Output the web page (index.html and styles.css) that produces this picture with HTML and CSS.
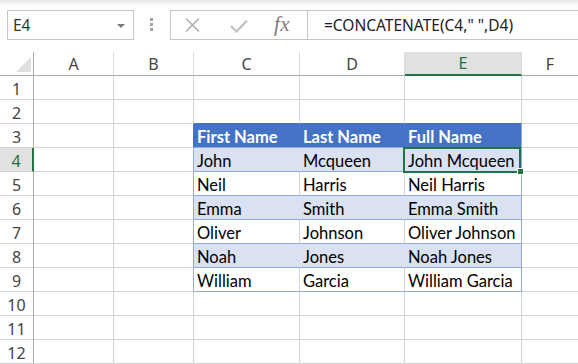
FILE: index.html
```html
<!DOCTYPE html>
<html>
<head>
<meta charset="utf-8">
<link rel="stylesheet" href="styles.css">
</head>
<body>
<div class="fbar">
  <div class="namebox"><span class="ref">E4</span><span class="arrow"></span></div>
  <div class="grip"><i></i><i></i><i></i></div>
  <div class="fbox">
    <div class="btns">
      <svg class="ic-x" width="15" height="14" viewBox="0 0 15 14"><path d="M1 0.5 L14 13.5 M14 0.5 L1 13.5" stroke="#a9a9a9" stroke-width="1.4" fill="none"/></svg>
      <svg class="ic-ok" width="18" height="14" viewBox="0 0 18 14"><path d="M1 7 L6.5 12.5 L17 1.5" stroke="#c3c3c3" stroke-width="2.4" fill="none"/></svg>
      <span class="fx">fx</span>
    </div>
    <div class="formula">=CONCATENATE(C4," ",D4)</div>
  </div>
</div>
<div class="sheet">
  <div class="corner"></div><div class="ch">A</div><div class="ch">B</div><div class="ch">C</div><div class="ch">D</div><div class="ch sel">E</div><div class="ch last">F</div>

  <div class="rh">1</div><div class="c"></div><div class="c"></div><div class="c"></div><div class="c"></div><div class="c"></div><div class="c last"></div>
  <div class="rh">2</div><div class="c"></div><div class="c"></div><div class="c top"></div><div class="c top"></div><div class="c top"></div><div class="c last"></div>
  <div class="rh">3</div><div class="c"></div><div class="c lhd"></div><div class="c hd">First Name</div><div class="c hd">Last Name</div><div class="c hd end">Full Name</div><div class="c last"></div>
  <div class="rh sel">4</div><div class="c"></div><div class="c ledge"></div><div class="c band">John</div><div class="c band">Mcqueen</div><div class="c band end">John Mcqueen</div><div class="c last"></div>
  <div class="rh">5</div><div class="c"></div><div class="c ledge"></div><div class="c wr">Neil</div><div class="c wr">Harris</div><div class="c wr end">Neil Harris</div><div class="c last"></div>
  <div class="rh">6</div><div class="c"></div><div class="c ledge"></div><div class="c band">Emma</div><div class="c band">Smith</div><div class="c band end">Emma Smith</div><div class="c last"></div>
  <div class="rh">7</div><div class="c"></div><div class="c ledge"></div><div class="c wr">Oliver</div><div class="c wr">Johnson</div><div class="c wr end">Oliver Johnson</div><div class="c last"></div>
  <div class="rh">8</div><div class="c"></div><div class="c ledge"></div><div class="c band">Noah</div><div class="c band">Jones</div><div class="c band end">Noah Jones</div><div class="c last"></div>
  <div class="rh">9</div><div class="c"></div><div class="c ledge"></div><div class="c wr">William</div><div class="c wr">Garcia</div><div class="c wr end">William Garcia</div><div class="c last"></div>
  <div class="rh">10</div><div class="c"></div><div class="c"></div><div class="c"></div><div class="c"></div><div class="c"></div><div class="c last"></div>
  <div class="rh">11</div><div class="c"></div><div class="c"></div><div class="c"></div><div class="c"></div><div class="c"></div><div class="c last"></div>
  <div class="rh">12</div><div class="c"></div><div class="c"></div><div class="c"></div><div class="c"></div><div class="c"></div><div class="c last"></div>

  <div class="selbox"></div>
  <div class="handle"></div>
</div>
</body>
</html>
```
FILE: styles.css
```css
* { box-sizing: border-box; }

body {
  margin: 0;
  width: 578px;
  height: 364px;
  overflow: hidden;
  background: #fff;
  font-family: "Noto Sans", "Open Sans", sans-serif;
}

/* ---------- formula bar ---------- */
.fbar {
  height: 52px;
  display: flex;
  align-items: flex-start;
  padding-top: 10px;
  background: linear-gradient(#e8e8e8, #fbfbfb 5px, #fff 8px);
}

.namebox {
  margin-left: 7px;
  width: 127px;
  height: 30px;
  border: 1px solid #c6c6c6;
  background: #fff;
  display: flex;
  align-items: center;
  justify-content: space-between;
  padding: 0 8px 0 5px;
  font-size: 15.5px;
  color: #333;
}

.arrow {
  width: 0;
  height: 0;
  border-left: 4px solid transparent;
  border-right: 4px solid transparent;
  border-top: 4px solid #7a7a7a;
  margin-top: 1px;
}

.grip {
  margin-left: 16px;
  margin-top: 8px;
  display: flex;
  flex-direction: column;
  gap: 2px;
}
.grip i {
  display: block;
  width: 3px;
  height: 3px;
  background: #a3a3a3;
}

.fbox {
  margin-left: 17px;
  flex: 1;
  height: 30px;
  border: 1px solid #c6c6c6;
  border-right: none;
  background: #fff;
  display: flex;
}

.btns {
  width: 137px;
  border-right: 1px solid #c6c6c6;
  display: flex;
  align-items: center;
}
.ic-x { margin-left: 14px; }
.ic-ok { margin-left: 30px; margin-top: 1px; }
.fx {
  margin-left: 26px;
  font-family: "Liberation Serif", "DejaVu Serif", serif;
  font-style: italic;
  font-size: 21px;
  color: #7d7d7d;
  letter-spacing: 0.5px;
  line-height: 1;
  margin-top: -2px;
}

.formula {
  padding-left: 16px;
  display: flex;
  align-items: center;
  white-space: nowrap;
  font-size: 15.5px;
  color: #222;
}

/* ---------- sheet ---------- */
.sheet {
  position: relative;
  display: grid;
  grid-template-columns: 34px 80px 80px 106px 105px 117px 56px;
  grid-auto-rows: 24px;
}

.sheet > div {
  border-right: 1px solid #d4d4d4;
  border-bottom: 1px solid #d4d4d4;
}

.corner {
  display: flex;
  justify-content: flex-end;
  align-items: flex-end;
  padding: 0 2px 3px 0;
  border-right-color: #ababab !important;
  border-bottom-color: #ababab !important;
}
.corner::after {
  content: "";
  width: 15px;
  height: 15px;
  background: #dfdfdf;
  clip-path: polygon(100% 0, 100% 100%, 0 100%);
}

.ch {
  display: flex;
  align-items: center;
  justify-content: center;
  font-size: 16px;
  color: #444;
  border-right-color: #dadada !important;
  border-bottom-color: #ababab !important;
}
.ch.sel {
  background: #e1e1e1;
  color: #217346;
  border-bottom: 2px solid #217346 !important;
}

.rh {
  display: flex;
  align-items: center;
  justify-content: center;
  padding-top: 2px;
  font-size: 16px;
  color: #444;
  border-right-color: #ababab !important;
}
.rh.sel {
  background: #e1e1e1;
  color: #217346;
  border-right: 2px solid #217346 !important;
}

.sheet > .last { border-right: none; }

.c {
  font-family: "Lato", "Liberation Sans", sans-serif;
  font-size: 16.5px;
  line-height: 20px;
  padding: 3px 0 0 3px;
  color: #000;
  white-space: nowrap;
  overflow: hidden;
}

.c.top { border-bottom-color: #4472c4; }
.c.lhd { border-right-color: #4472c4; }
.c.ledge { border-right-color: #8ea9db; }

.c.hd {
  background: #4472c4;
  color: #fff;
  font-weight: 700;
  border-right-color: #4472c4;
  border-bottom-color: #8ea9db;
}
.c.band {
  background: #d9e1f2;
  border-right-color: #d9e1f2;
  border-bottom-color: #8ea9db;
}
.c.wr {
  border-bottom-color: #8ea9db;
}
.c.end { border-right-color: #8ea9db; }

.selbox {
  position: absolute;
  left: 403px;
  top: 95px;
  width: 118px;
  height: 26px;
  border: 2px solid #217346 !important;
}
.handle {
  position: absolute;
  left: 517px;
  top: 116px;
  width: 7px;
  height: 7px;
  background: #217346;
  border: 1px solid #fff !important;
}
```
